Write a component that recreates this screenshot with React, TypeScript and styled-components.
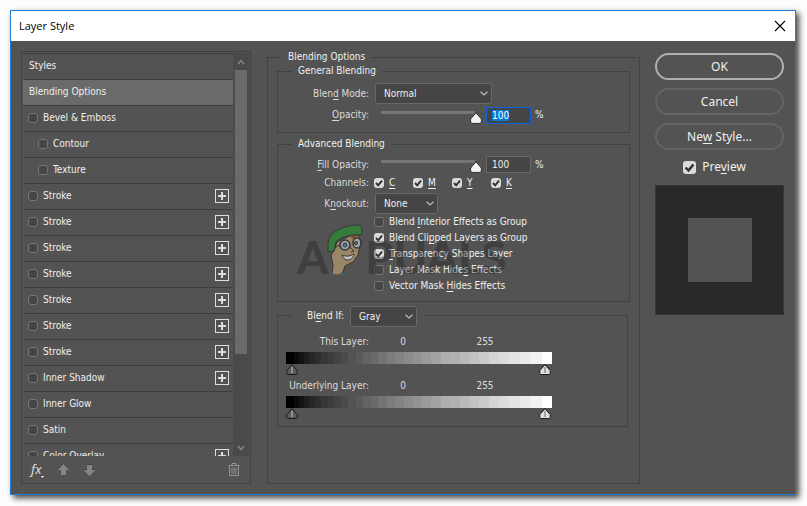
import React, { useState } from 'react';
import styled, { createGlobalStyle, css } from 'styled-components';

const GlobalStyle = createGlobalStyle`
  *, *::before, *::after { box-sizing: border-box; }
  html, body, #root { height: 100%; }
  body {
    margin: 0;
    background: #fdfdfd;
    color: #f0f0f0;
    font: 10px/14px "DejaVu Sans Condensed", "DejaVu Sans", sans-serif;
  }
  button, input, select { font: inherit; color: inherit; }
  u { text-underline-offset: 2px; }
`;

const Stage = styled.div`
  display: flex;
  height: 100%;
  padding: 10px 11px 11px 10px;
`;

const Dialog = styled.main`
  flex: 1;
  display: flex;
  flex-direction: column;
  min-width: 0;
  border: 1px solid #1e7fd4;
  background: #535353;
  box-shadow: 3px 3px 6px rgba(0, 0, 0, 0.75);
`;

const TitleBar = styled.header`
  display: flex;
  align-items: center;
  justify-content: space-between;
  height: 30px;
  padding: 0 9px 0 8px;
  background: #fff;
  color: #000;
`;

const Title = styled.h1`
  margin: 0;
  font: 11px/16px "Open Sans", "Noto Sans", sans-serif;
`;

const IconButton = styled.button`
  display: flex;
  padding: 0;
  border: 0;
  background: none;
`;

const Body = styled.div`
  flex: 1;
  display: flex;
  min-height: 0;
  padding: 9px 11px 10px 10px;
`;

const StylesPanel = styled.nav`
  flex: 0 0 230px;
  display: flex;
  flex-direction: column;
  margin-top: 1px;
  padding: 1px;
  border: 1px solid #424242;
`;

const ListArea = styled.div`
  flex: 1;
  display: flex;
  min-height: 0;
  overflow: hidden;
`;

const StyleList = styled.ul`
  flex: 1;
  margin: 0;
  padding: 0;
  list-style: none;
`;

const StyleRow = styled.li<{ $selected?: boolean; $nested?: boolean }>`
  display: flex;
  align-items: center;
  height: 26px;
  padding: 0 4px 1px ${(p) => (p.$nested ? 15 : 5)}px;
  border-top: 1px solid #3c3c3c;
  background: ${(p) => (p.$selected ? '#6a6a6a' : 'transparent')};
`;

const ListText = styled.span`
  padding-left: 1px;
`;

const CheckLabel = styled.label<{ $large?: boolean }>`
  display: flex;
  align-items: center;
  gap: 5px;
  ${(p) =>
    p.$large &&
    css`
      gap: 6px;
    `}
`;

const checkMark = `url("data:image/svg+xml,%3Csvg xmlns='http://www.w3.org/2000/svg' viewBox='0 0 10 10'%3E%3Cpath d='M2 5l2.2 2.3L8 2.7' fill='none' stroke='%23303030' stroke-width='1.9'/%3E%3C/svg%3E")`;

const Check = styled.input.attrs({ type: 'checkbox' })<{ $large?: boolean }>`
  appearance: none;
  flex: none;
  width: ${(p) => (p.$large ? 13 : 10)}px;
  height: ${(p) => (p.$large ? 13 : 10)}px;
  margin: 0;
  border: 1px solid #757575;
  border-radius: 3px;
  background: #454545;
  &:checked {
    border: 0;
    background: #dadada ${checkMark} center / 100% no-repeat;
  }
`;

const AddButton = styled(IconButton)`
  margin-left: auto;
`;

const Scrollbar = styled.div`
  flex: 0 0 16px;
  display: flex;
  flex-direction: column;
  align-items: center;
  background: #4a4a4a;
`;

const ScrollArrow = styled(IconButton)`
  height: 17px;
  align-items: center;
`;

const ScrollTrack = styled.div`
  flex: 1;
  width: 12px;
`;

const ScrollThumb = styled.div`
  height: 77%;
  background: #6a6a6a;
`;

const PanelFooter = styled.footer`
  display: flex;
  align-items: center;
  gap: 13px;
  height: 26px;
  padding: 0 9px 0 8px;
`;

const Group = styled.fieldset`
  min-width: 0;
  margin: 0;
  padding: 0;
  border: 1px solid #424242;
`;

const Options = styled(Group)`
  flex: 1;
  margin-left: 16px;
  padding: 0 9px;
`;

const Legend = styled.legend<{ $outer?: boolean }>`
  margin-left: ${(p) => (p.$outer ? 5 : 14)}px;
  padding: 0 6px;
  line-height: 14px;
`;

const General = styled(Group)`
  padding: 5px 0 6px;
`;

const Advanced = styled(Group)`
  position: relative;
  margin-top: 4px;
  padding: 5px 0 7px;
`;

const BlendIf = styled(Group)`
  margin: 4px 2px 0 0;
  padding: 11px 8px 6px;
`;

const BlendIfLegend = styled.legend`
  display: flex;
  align-items: flex-start;
  gap: 6px;
  height: 18px;
  margin-left: 6px;
  padding: 0 7px 0 15px;
  line-height: 20px;
`;

const FormRow = styled.div<{ $height: number }>`
  display: grid;
  grid-template-columns: 91px auto;
  justify-content: start;
  column-gap: 6px;
  align-items: center;
  height: ${(p) => p.$height}px;
`;

const FieldLabel = styled.label`
  text-align: right;
  color: #dcdcdc;
`;

const RowText = styled.span`
  text-align: right;
  color: #dcdcdc;
`;

const arrow = `url("data:image/svg+xml,%3Csvg xmlns='http://www.w3.org/2000/svg' width='8' height='5'%3E%3Cpath d='M.5 .7L4 4L7.500 .7' fill='none' stroke='%23bcbcbc' stroke-width='1.2'/%3E%3C/svg%3E")`;

const Select = styled.select<{ $width: number }>`
  appearance: none;
  width: ${(p) => p.$width}px;
  height: 21px;
  padding: 0 8px;
  border: 1px solid #686868;
  border-radius: 3px;
  background: #454545 ${arrow} right 3px center no-repeat;
`;

const SliderGroup = styled.div`
  display: flex;
  align-items: center;
`;

const thumbShape = `url("data:image/svg+xml,%3Csvg xmlns='http://www.w3.org/2000/svg' width='12' height='12'%3E%3Cpath d='M6 .8L11.400 7V10L10 11.400H2L.6 10V7Z' fill='%23f2f2f2' stroke='%232e2e2e' stroke-linejoin='round'/%3E%3C/svg%3E")`;

const Slider = styled.input.attrs({ type: 'range' })`
  appearance: none;
  width: 107px;
  height: 17px;
  margin: 0;
  background: linear-gradient(#757575, #757575) 6px 4px / 94px 3px no-repeat;
  &::-webkit-slider-thumb {
    appearance: none;
    width: 12px;
    height: 12px;
    margin-top: 5px;
    background: ${thumbShape} center no-repeat;
  }
`;

const NumberBox = styled.input<{ $active?: boolean }>`
  width: 45px;
  height: 17px;
  margin: 0 4px;
  padding: 0 5px;
  border: 1px solid ${(p) => (p.$active ? '#1062dd' : '#686868')};
  background: #454545;
  outline: none;
  &::selection { background: #0a78d7; color: #fff; }
`;

const Channels = styled.div`
  display: grid;
  grid-template-columns: repeat(4, 39px);
  margin-left: -1px;
`;

const CheckColumn = styled.div`
  display: grid;
  grid-auto-rows: 16px;
  align-items: center;
  justify-content: start;
  margin-left: 96px;
`;

const Watermark = styled.div`
  position: absolute;
  left: 19px;
  top: 73px;
  display: flex;
  align-items: flex-end;
  pointer-events: none;
  color: rgba(32, 32, 32, 0.4);
  font: 900 45px/46px Lato, sans-serif;
  svg { margin: 0 3px 5px -3px; opacity: 0.75; }
`;

const Layer = styled.div`
  & + & { margin-top: 3px; }
`;

const LayerValues = styled.div`
  display: grid;
  grid-template-columns: 83px 68px 96px;
  text-align: right;
  white-space: nowrap;
  color: #dcdcdc;
  padding-bottom: 3px;
`;

const Value = styled.output`
  text-align: center;
`;

const edges = [8, 13, 18, 23, 29, 35, 42, 48, 55, 62, 70, 77, 85, 92, 101, 109, 118, 127, 136, 145, 155, 164, 174, 184, 193, 203, 213, 223, 234, 244, 256, 266];
const greys = [0, 10, 19, 28, 38, 46, 54, 61, 67, 74, 83, 90, 99, 106, 115, 124, 131, 139, 147, 155, 163, 173, 177, 186, 194, 202, 213, 220, 228, 235, 242, 255];
const stops = edges
  .map((end, i) => {
    const pct = (n: number) => ((n / 266) * 100).toFixed(2);
    const g = greys[i];
    return `rgb(${g},${g},${g}) ${pct(i ? edges[i - 1] : 0)}% ${pct(end)}%`;
  })
  .join(', ');

const Ramp = styled.div`
  width: 266px;
  height: 12px;
  background: linear-gradient(to right, ${stops});
`;

const Handles = styled.div`
  display: flex;
  justify-content: space-between;
  width: 265px;
  height: 12px;
`;

const Actions = styled.aside`
  flex: 0 0 129px;
  display: flex;
  flex-direction: column;
  gap: 8px;
  margin-left: 15px;
  padding-top: 3px;
`;

const PillButton = styled.button<{ $primary?: boolean }>`
  height: 27px;
  padding: 0;
  border: 2px solid ${(p) => (p.$primary ? '#b0b0b0' : '#646464')};
  border-radius: 14px;
  background: none;
  font: 12px/18px "Noto Sans", sans-serif;
`;

const PreviewToggle = styled.div`
  display: flex;
  justify-content: center;
  height: 18px;
  margin-bottom: 1px;
  padding-right: 10px;
  font: 12px/18px "Noto Sans", sans-serif;
`;

const PreviewBox = styled.div`
  display: grid;
  place-items: center;
  height: 130px;
  border: 1px solid #363636;
  background: #292929;
`;

const Swatch = styled.div`
  width: 64px;
  height: 64px;
  background: #535353;
`;

const Chevron = ({ up }: { up?: boolean }) => (
  <svg width="8" height="6" viewBox="0 0 8 6" fill="none" stroke="#8a8a8a" strokeWidth="1.3">
    <path d={up ? 'M1 5L4 1.500L7 5' : 'M1 1L4 4.500L7 1'} />
  </svg>
);

const PlusIcon = () => (
  <svg width="14" height="14" viewBox="0 0 14 14" fill="none" stroke="#dedede">
    <rect x=".5" y=".5" width="13" height="13" />
    <path d="M7 3v8M3 7h8" strokeWidth="2" />
  </svg>
);

const ArrowIcon = ({ down }: { down?: boolean }) => (
  <svg width="13" height="13" viewBox="0 0 13 13">
    <path d={down ? 'M4 1h5v5h3.500L6.500 12L.5 6H4z' : 'M6.500 0L12.500 6H9v5H4V6H.5z'} fill="#3f3f3f" />
    <path d={down ? 'M4 2h5v5h3.500L6.500 13L.5 7H4z' : 'M6.500 1L12.500 7H9v5H4V7H.5z'} fill="#858585" />
  </svg>
);

const TrashIcon = () => (
  <svg width="12" height="13" viewBox="0 0 12 13" fill="none" stroke="#939393">
    <path d="M.5 2.500h11M4 2.500v-2h4v2M1.500 3v9.500h9V3M4 4.500v6.500M6 4.500v6.500M8 4.500v6.500" />
  </svg>
);

const FxIcon = styled.span`
  display: flex;
  align-items: flex-end;
  color: #dedede;
  font: italic 13px/18px "Noto Sans", sans-serif;
`;

const RampHandle = ({ light }: { light?: boolean }) => (
  <svg width="12" height="11" viewBox="0 0 12 11">
    <path d="M6 .7L11.200 6.500V10L10.500 10.500H1.500L.8 10V6.500Z" fill={light ? '#dedede' : '#5b5b5b'} stroke="#1c1c1c" strokeLinejoin="round" />
    <path d="M6 3v6" stroke={light ? '#8f8f8f' : '#a5a5a5'} strokeWidth="1.500" />
  </svg>
);

const Mascot = () => (
  <svg width="37" height="51" viewBox="0 0 37 51" stroke="#2e2e2e" strokeLinejoin="round">
    <path d="M4 51l2-4 4 2 5-1 3 3z" fill="#2d8fae" stroke="none" />
    <path d="M8 27L11 18 28 10l5 2 1 10-2 9-5 7-8 4-2 6-3 3H6l1-9-2-11z" fill="#b0976d" />
    <path d="M24 11l6-1 1 6-5-1z" fill="#8f4f2b" stroke="none" />
    <path d="M2 28V20C2 9 15 1 34 1c3 4 2 8 1 10C25 10 14 13 10 18l-2 9z" fill="#2c8a34" />
    <circle cx="19" cy="21" r="5" fill="#b9c2c4" strokeWidth="1.600" />
    <ellipse cx="31" cy="19" rx="4" ry="5" fill="#b9c2c4" strokeWidth="1.600" />
    <circle cx="19" cy="21" r="2" fill="#3b8fb0" />
    <circle cx="30" cy="19" r="1.600" fill="#3b8fb0" />
    <path d="M24 23l4 4-3 1M8 24l6-3" fill="none" />
    <path d="M16 31c5 2 8 1 12-1-1 4-3 6-7 6-2 0-4-2-5-5z" fill="#e4e4e4" />
  </svg>
);

type Item = { text: string; nested?: boolean; add?: boolean; plain?: boolean; selected?: boolean };

const stroke: Item = { text: 'Stroke', add: true };
const items: Item[] = [
  { text: 'Styles', plain: true },
  { text: 'Blending Options', plain: true, selected: true },
  { text: 'Bevel & Emboss' },
  { text: 'Contour', nested: true },
  { text: 'Texture', nested: true },
  stroke, stroke, stroke, stroke, stroke, stroke, stroke,
  { text: 'Inner Shadow', add: true },
  { text: 'Inner Glow' },
  { text: 'Satin' },
  { text: 'Color Overlay', add: true },
];

const LayerRange = ({ name }: { name: string }) => (
  <Layer>
    <LayerValues>
      <span>{name}</span>
      <Value>0</Value>
      <Value>255</Value>
    </LayerValues>
    <Ramp />
    <Handles>
      <RampHandle />
      <RampHandle light />
    </Handles>
  </Layer>
);

export default function App() {
  const [opacity, setOpacity] = useState('100');
  const [fill, setFill] = useState('100');
  return (
    <>
      <GlobalStyle />
      <Stage>
        <Dialog>
          <TitleBar>
            <Title>Layer Style</Title>
            <IconButton aria-label="Close">
              <svg width="12" height="12" viewBox="0 0 12 12" stroke="#000" strokeWidth="1.100">
                <path d="M1 1l10 10M11 1L1 11" />
              </svg>
            </IconButton>
          </TitleBar>
          <Body>
            <StylesPanel>
              <ListArea>
                <StyleList>
                  {items.map((item, i) => (
                    <StyleRow key={i} $selected={item.selected} $nested={item.nested}>
                      {item.plain ? (
                        <ListText>{item.text}</ListText>
                      ) : (
                        <CheckLabel><Check />{item.text}</CheckLabel>
                      )}
                      {item.add && <AddButton aria-label={`Add ${item.text}`}><PlusIcon /></AddButton>}
                    </StyleRow>
                  ))}
                </StyleList>
                <Scrollbar>
                  <ScrollArrow aria-label="Scroll up"><Chevron up /></ScrollArrow>
                  <ScrollTrack><ScrollThumb /></ScrollTrack>
                  <ScrollArrow aria-label="Scroll down"><Chevron /></ScrollArrow>
                </Scrollbar>
              </ListArea>
              <PanelFooter>
                <IconButton aria-label="Effects">
                  <FxIcon>fx<svg width="3" height="2"><path d="M0 0h3L1.500 2z" fill="#fff" /></svg></FxIcon>
                </IconButton>
                <IconButton aria-label="Move up"><ArrowIcon /></IconButton>
                <IconButton aria-label="Move down"><ArrowIcon down /></IconButton>
                <AddButton aria-label="Delete"><TrashIcon /></AddButton>
              </PanelFooter>
            </StylesPanel>

            <Options>
              <Legend $outer>Blending Options</Legend>
              <General>
                <Legend>General Blending</Legend>
                <FormRow $height={21}>
                  <FieldLabel htmlFor="mode">Blen<u>d</u> Mode:</FieldLabel>
                  <Select id="mode" $width={117}><option>Normal</option></Select>
                </FormRow>
                <FormRow $height={22}>
                  <FieldLabel htmlFor="opacity"><u>O</u>pacity:</FieldLabel>
                  <SliderGroup>
                    <Slider aria-label="Opacity slider" value={opacity} onChange={(e) => setOpacity(e.target.value)} />
                    <NumberBox id="opacity" $active autoFocus onFocus={(e) => e.target.select()} value={opacity} onChange={(e) => setOpacity(e.target.value)} />
                    %
                  </SliderGroup>
                </FormRow>
              </General>
              <Advanced>
                <Legend>Advanced Blending</Legend>
                <FormRow $height={17}>
                  <FieldLabel htmlFor="fill"><u>F</u>ill Opacity:</FieldLabel>
                  <SliderGroup>
                    <Slider aria-label="Fill opacity slider" value={fill} onChange={(e) => setFill(e.target.value)} />
                    <NumberBox id="fill" value={fill} onChange={(e) => setFill(e.target.value)} />
                    %
                  </SliderGroup>
                </FormRow>
                <FormRow $height={20}>
                  <RowText>Channels:</RowText>
                  <Channels>
                    {['C', 'M', 'Y', 'K'].map((c) => (
                      <CheckLabel key={c}><Check defaultChecked /><u>{c}</u></CheckLabel>
                    ))}
                  </Channels>
                </FormRow>
                <FormRow $height={21}>
                  <FieldLabel htmlFor="knockout">K<u>n</u>ockout:</FieldLabel>
                  <Select id="knockout" $width={63}><option>None</option></Select>
                </FormRow>
                <CheckColumn>
                  <CheckLabel><Check /><span>Blend <u>I</u>nterior Effects as Group</span></CheckLabel>
                  <CheckLabel><Check defaultChecked /><span>Blend Cli<u>p</u>ped Layers as Group</span></CheckLabel>
                  <CheckLabel><Check defaultChecked /><span><u>T</u>ransparency Shapes Layer</span></CheckLabel>
                  <CheckLabel><Check /><span>Layer Mask Hide<u>s</u> Effects</span></CheckLabel>
                  <CheckLabel><Check /><span>Vector Mask <u>H</u>ides Effects</span></CheckLabel>
                </CheckColumn>
                <Watermark aria-hidden="true">A<Mascot />PUALS</Watermark>
              </Advanced>
              <BlendIf>
                <BlendIfLegend>
                  <label htmlFor="blendif">Bl<u>e</u>nd If:</label>
                  <Select id="blendif" $width={67}><option>Gray</option></Select>
                </BlendIfLegend>
                <LayerRange name="This Layer:" />
                <LayerRange name="Underlying Layer:" />
              </BlendIf>
            </Options>

            <Actions>
              <PillButton $primary>OK</PillButton>
              <PillButton>Cancel</PillButton>
              <PillButton>Ne<u>w</u> Style...</PillButton>
              <PreviewToggle>
                <CheckLabel $large><Check $large defaultChecked /><span>Pre<u>v</u>iew</span></CheckLabel>
              </PreviewToggle>
              <PreviewBox><Swatch /></PreviewBox>
            </Actions>
          </Body>
        </Dialog>
      </Stage>
    </>
  );
}
